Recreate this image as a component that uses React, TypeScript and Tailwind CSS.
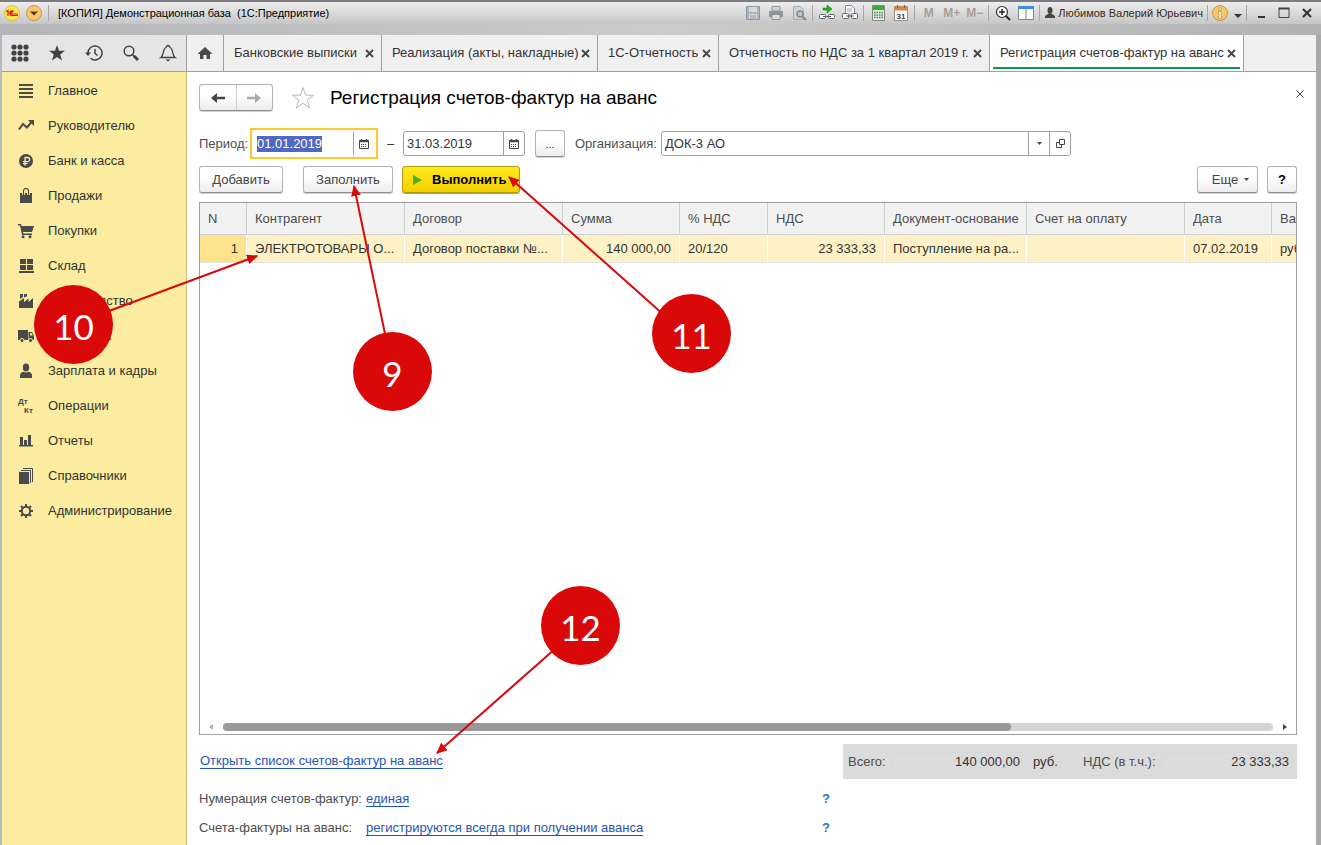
import { useEffect, useRef } from "react";
import type { ReactNode } from "react";

const SECTIONS: { label: string; icon: ReactNode }[] = [
  { label: "Главное", icon: <path d="M1 1h14v2H1zM1 5h14v2H1zM1 9h14v2H1zM1 13h14v2H1z" /> },
  {
    label: "Руководителю",
    icon: (
      <>
        <path d="M1 11.500 5 6l4 3.500L13.500 4" fill="none" stroke="currentColor" strokeWidth="2" />
        <path d="M10 2h6v6z" />
      </>
    ),
  },
  {
    label: "Банк и касса",
    icon: (
      <>
        <circle cx="8" cy="8" r="7" />
        <path
          d="M7 12.500V4.500h2.500a2 2 0 0 1 0 4.200H5M5 10.600h4.500"
          fill="none"
          stroke="#fbeca0"
          strokeWidth="1.3"
        />
      </>
    ),
  },
  {
    label: "Продажи",
    icon: (
      <>
        <path d="M2 5h12v10H2z" />
        <path d="M5.500 7V3.500a2.500 2.500 0 0 1 5 0V7" fill="none" stroke="#fbeca0" strokeWidth="3" />
        <path d="M5.500 7V3a2.500 2.500 0 0 1 5 0v4" fill="none" stroke="currentColor" strokeWidth="1.2" />
      </>
    ),
  },
  {
    label: "Покупки",
    icon: (
      <>
        <path d="M0 1h3l.6 2H16l-2 6H5l.4 1.500H14V12H4L2 2.500H0z" />
        <circle cx="5" cy="13.700" r="1.500" />
        <circle cx="12" cy="13.700" r="1.500" />
      </>
    ),
  },
  { label: "Склад", icon: <path d="M2 1h6v5H2zM9 1h6v5H9zM2 7h6v5H2zM9 7h6v5H9zM1 13h15v2H1z" /> },
  {
    label: "Производство",
    icon: <path d="M1 15V8.500L6 5v4l4.500-3.500v3.500L15 5v10zM2 1h3v3L2 6zM6 1h3v2.500L6 4.500z" />,
  },
  {
    label: "ОС и НМА",
    icon: (
      <>
        <path d="M0 2h10v10H0zM10.500 4H14l2 4v4h-5.500z" />
        <path d="M12 5h1.500l1.200 2.500H12z" fill="#fbeca0" />
        <circle cx="4" cy="12.500" r="2" stroke="#fbeca0" />
        <circle cx="12.500" cy="12.500" r="2" stroke="#fbeca0" />
      </>
    ),
  },
  {
    label: "Зарплата и кадры",
    icon: (
      <>
        <ellipse cx="8" cy="4.500" rx="3.200" ry="4" />
        <path d="M2 15v-3c0-2 2-3 4-3.200 1 1 3 1 4 0C12 9 14 10 14 12v3z" />
      </>
    ),
  },
  {
    label: "Операции",
    icon: (
      <g fontFamily="Liberation Sans, sans-serif" fontSize="8" fontWeight="bold">
        <text x="0" y="6">
          Дт
        </text>
        <text x="6" y="15">
          Кт
        </text>
      </g>
    ),
  },
  { label: "Отчеты", icon: <path d="M2 4h3v8H2zM6 7h3v5H6zM10 2h3v10h-3zM1 12h14v1.500H1z" /> },
  {
    label: "Справочники",
    icon: (
      <>
        <path d="M1 4h10v12H1z" />
        <path d="M3 2.500h9.500V15M5 .500h9.500V14" fill="none" stroke="currentColor" />
      </>
    ),
  },
  {
    label: "Администрирование",
    icon: (
      <>
        <circle cx="8" cy="8" r="4.200" fill="none" stroke="currentColor" strokeWidth="2" />
        <path
          d="M8 1v2.500M8 12.500V15M1 8h2.500M12.500 8H15M3 3l2 2M11 11l2 2M3 13l2-2M11 5l2-2"
          stroke="currentColor"
          strokeWidth="2"
        />
      </>
    ),
  },
];

const TABS = [
  { title: "Банковские выписки", width: "w-[158px]" },
  { title: "Реализация (акты, накладные)", width: "w-[216px]" },
  { title: "1С-Отчетность", width: "w-[121px]" },
  { title: "Отчетность по НДС за 1 квартал 2019 г.", width: "w-[271px]" },
  { title: "Регистрация счетов-фактур на аванс", width: "w-[254px]" },
];

const COLUMNS = [
  { title: "N", width: "w-[47px]", value: "1", right: true },
  { title: "Контрагент", width: "w-[158px]", value: "ЭЛЕКТРОТОВАРЫ О..." },
  { title: "Договор", width: "w-[158px]", value: "Договор поставки №..." },
  { title: "Сумма", width: "w-[117px]", value: "140 000,00", right: true },
  { title: "% НДС", width: "w-[88px]", value: "20/120" },
  { title: "НДС", width: "w-[117px]", value: "23 333,33", right: true },
  { title: "Документ-основание", width: "w-[142px]", value: "Поступление на ра..." },
  { title: "Счет на оплату", width: "w-[158px]", value: "" },
  { title: "Дата", width: "w-[87px]", value: "07.02.2019" },
  { title: "Валюта", width: "", value: "руб." },
];

const BUTTON =
  "flex h-[27px] items-center justify-center rounded-[3px] border border-[#b3b3b3] border-b-[#8f8f8f] bg-linear-to-b from-white from-40% to-[#ececec] shadow-[0_1px_0_#d0d0d0]";

function BarIcon({ label, children }: { label: string; children: ReactNode }) {
  return (
    <button type="button" aria-label={label} className="flex h-5 w-[23px] items-center justify-center">
      <svg width="16" height="16" viewBox="0 0 16 16" fill="none">
        {children}
      </svg>
    </button>
  );
}

function Separator() {
  return <span className="mx-[2px] h-4 w-px shrink-0 bg-[#a6a6a6]" />;
}

function TitleBar() {
  return (
    <header className="flex h-[35px] shrink-0 flex-col border-t-2 border-[#7c7b80] bg-linear-to-r from-[#b4b5b8] via-[#cbcbcb] to-[#b2b2b4]">
      <div className="flex h-[22px] items-center bg-linear-to-b from-[#ededed] to-[#c6c6c7] pr-[3px] pl-1 text-[11px] text-[#1b1b1b]">
        <svg width="16" height="16" viewBox="0 0 16 16">
          <circle cx="8" cy="8" r="7.500" fill="#fde94b" stroke="#e9bd43" />
          <path
            d="M2 6.500 4 5.500V11M9.500 6.500A2.300 2.300 0 1 0 8.500 10.500H14M8.800 7.500A1 1 0 1 0 8.500 9H14"
            fill="none"
            stroke="#d8150f"
            strokeWidth="1.200"
          />
        </svg>
        <button type="button" aria-label="Главное меню" className="ml-[6px]">
          <svg width="16" height="16" viewBox="0 0 16 16">
            <circle cx="8" cy="8" r="7.500" fill="#f9c86c" stroke="#cf9443" />
            <path d="M4 6.500h8L8 10.500z" fill="#4f3d22" />
          </svg>
        </button>
        <span className="ml-[6px] h-4 w-px bg-[#a6a6a6]" />
        <span className="ml-[9px] whitespace-pre text-black">
          {"[КОПИЯ] Демонстрационная база  (1С:Предприятие)"}
        </span>

        <div className="ml-auto flex items-center">
          <BarIcon label="Сохранить">
            <path d="M1.500 1.500h13v13h-13z" fill="#a9b4bf" stroke="#8b9aaa" />
            <path d="M4 2h8v5H4zM4 9h8v5H4z" fill="#d5dade" />
            <path d="M5 11h6M5 13h6" stroke="#8b9aaa" />
          </BarIcon>
          <BarIcon label="Печать">
            <path d="M4 1.500h8V6H4z" fill="#d0d4d8" stroke="#8e959d" />
            <path d="M1 6h14v6H1z" fill="#8e979f" />
            <path d="M4 9.500h8v5H4z" fill="#d9dcdf" stroke="#8e959d" />
          </BarIcon>
          <BarIcon label="Предварительный просмотр">
            <path d="M2.500 1.500h7l3 3v10h-10z" fill="#d3d5d8" stroke="#a6abb0" />
            <circle cx="9" cy="9" r="3" fill="#bcc9d4" stroke="#7d8b99" strokeWidth="1.500" />
            <path d="m11 11 4 4" stroke="#7d8b99" strokeWidth="2" />
          </BarIcon>
          <Separator />
          <BarIcon label="Перейти по ссылке">
            <path d="M4 3h4V0l5 4-5 4V5H4z" fill="#22b022" stroke="#157a15" strokeWidth=".5" />
            <rect x="0.500" y="9.500" width="6" height="4" rx="1" fill="#fff" stroke="#59636c" />
            <rect x="9.500" y="9.500" width="6" height="4" rx="1" fill="#fff" stroke="#59636c" />
            <path d="M4 11.500h8" stroke="#59636c" />
          </BarIcon>
          <BarIcon label="Получить ссылку">
            <path d="M3.500 8V.500h6l3 3V8" fill="#fff" stroke="#7f8992" />
            <path d="M5 4h5M5 6h5" stroke="#9ba6af" />
            <rect x="0.500" y="8.500" width="6" height="5" rx="1" fill="#fff" stroke="#59636c" />
            <rect x="9.500" y="8.500" width="6" height="5" rx="1" fill="#fff" stroke="#59636c" />
            <path d="M4 11h8" stroke="#59636c" />
          </BarIcon>
          <Separator />
          <BarIcon label="Калькулятор">
            <path d="M2.500.500h12v15h-12z" fill="#e8eee5" stroke="#7e8a7b" />
            <path d="M3 1h11v4H3z" fill="#35b23c" />
            <path
              d="M4 7.500h9M4 10h9M4 12.500h9"
              stroke="#4b7a4c"
              strokeWidth="1.500"
              strokeDasharray="1.500 1"
            />
          </BarIcon>
          <BarIcon label="Календарь">
            <path d="M1.500 1.500h13v14h-13z" fill="#fafafa" stroke="#9a8b7a" />
            <path d="M1.500 1.500h13v4h-13z" fill="#d8874b" />
            <path d="M4.500 0v3M11.500 0v3" stroke="#666" />
            <text
              x="3.500"
              y="13.500"
              fontSize="8"
              fontWeight="bold"
              fill="#444"
              fontFamily="Liberation Sans, sans-serif"
            >
              31
            </text>
          </BarIcon>
          <Separator />
          {["M", "M+", "M−"].map((name) => (
            <button key={name} type="button" className="w-[23px] text-center text-[12px] font-bold text-[#a99e95]">
              {name}
            </button>
          ))}
          <Separator />
          <BarIcon label="Масштаб">
            <circle cx="7" cy="7" r="5.500" fill="#fff" stroke="#2f2f2f" strokeWidth="1.200" />
            <path d="M4 7h6M7 4v6" stroke="#222" strokeWidth="1.500" />
            <path d="m11 11 4 4" stroke="#222" strokeWidth="2" />
          </BarIcon>
          <BarIcon label="Панели">
            <path d="M.500 1.500h15v13H.500z" fill="#fff" stroke="#7a8794" />
            <path d="M0 1h16v3H0z" fill="#3d8fdc" />
            <path d="M8 4v10" stroke="#7a8794" />
          </BarIcon>
          <Separator />
          <svg width="10" height="12" viewBox="0 0 10 12" className="ml-[3px] text-[#4b4540]">
            <ellipse cx="5" cy="3.500" rx="2.500" ry="3.500" fill="currentColor" />
            <path d="M0 11V9l3-2h4l3 2v2z" fill="currentColor" />
          </svg>
          <span className="mr-[2px] ml-[3px] text-[#3b2a1a]">Любимов Валерий Юрьевич</span>
          <Separator />
          <button type="button" aria-label="О программе" className="ml-[2px]">
            <svg width="16" height="16" viewBox="0 0 16 16">
              <circle cx="8" cy="8" r="7.500" fill="#f8c869" stroke="#cb9445" />
              <path d="M7 3h2.500v2H7zM6 6.500h3v5h1V13H6v-1.500h1V8H6z" fill="#fff" stroke="#8a6a35" strokeWidth=".5" />
            </svg>
          </button>
          <svg width="8" height="4" viewBox="0 0 8 4" className="mt-[6px] mr-[2px] ml-[6px]">
            <path d="M0 0h8L4 4z" fill="#333" />
          </svg>
          <Separator />
          <BarIcon label="Свернуть">
            <path d="M5 12h7" stroke="#333" strokeWidth="2" />
          </BarIcon>
          <BarIcon label="Развернуть">
            <path d="M3 3.500h10v9H3z" stroke="#444" />
            <path d="M2.500 3.500h11" stroke="#444" strokeWidth="2" />
          </BarIcon>
          <BarIcon label="Закрыть">
            <path d="m4 4 8 8M12 4l-8 8" stroke="#333" strokeWidth="2" />
          </BarIcon>
        </div>
      </div>
    </header>
  );
}

function TopBar() {
  return (
    <div className="flex h-[37px] shrink-0 border-b border-[#a0a0a0] bg-[#f0f0f0]">
      <div className="flex w-[185px] shrink-0 items-center justify-between border-r border-[#a0a0a0] bg-[#e5e5e5] px-[9px] text-[#424242]">
        <button type="button" aria-label="Меню функций">
          <svg width="18" height="18" viewBox="0 0 18 18" fill="currentColor">
            {[3, 9, 15].map((y) => [3, 9, 15].map((x) => <circle key={`${x}-${y}`} cx={x} cy={y} r="2.600" />))}
          </svg>
        </button>
        <button type="button" aria-label="Избранное">
          <svg width="18" height="18" viewBox="0 0 18 18" fill="currentColor">
            <path d="m9 1 2 5.800h6l-4.800 3.700L14 16.500 9 13l-5 3.500 1.800-6L1 6.800h6z" />
          </svg>
        </button>
        <button type="button" aria-label="История">
          <svg width="18" height="18" viewBox="0 0 18 18" fill="none" stroke="currentColor" strokeWidth="1.500">
            <path d="M3 9a7 7 0 1 1 2.500 5.300M10 5v4.500l2.500 2" />
            <path d="M0 8.500h6l-3 3.500z" fill="currentColor" stroke="none" />
          </svg>
        </button>
        <button type="button" aria-label="Поиск">
          <svg width="18" height="18" viewBox="0 0 18 18" fill="none" stroke="currentColor">
            <circle cx="7" cy="7" r="4.800" strokeWidth="1.500" />
            <path d="m10.500 10.500 2 2" strokeWidth="1.500" />
            <path d="m12 12 4 4" strokeWidth="3" />
          </svg>
        </button>
        <button type="button" aria-label="Уведомления">
          <svg width="18" height="18" viewBox="0 0 18 18" fill="none" stroke="currentColor" strokeWidth="1.300">
            <path d="M2 13.500c3-2 1.500-9 5.500-10.500a1.500 1.500 0 0 1 3 0c4 1.500 2.500 8.500 5.500 10.500z" />
            <path d="M6.500 15.500h5L9 17.500z" fill="currentColor" stroke="none" />
          </svg>
        </button>
      </div>
      <button
        type="button"
        aria-label="Начальная страница"
        className="flex w-[37px] shrink-0 items-center justify-center border-r border-[#a0a0a0] text-[#4a4a4a]"
      >
        <svg width="16" height="14" viewBox="0 0 16 14" fill="currentColor">
          <path d="M8 1 15.500 8H13v5H9.500V9h-3v4H3V8H.500z" />
        </svg>
      </button>
      {TABS.map(({ title, width }, i) => {
        const active = i === TABS.length - 1;
        return (
          <div
            key={title}
            className={`${width} flex shrink-0 flex-col border-r border-[#a0a0a0] px-[3px] ${active ? "bg-white" : ""}`}
          >
            <div
              className={`flex flex-1 items-center justify-between pr-1 pl-[7px] whitespace-nowrap text-[#333] ${active ? "pt-1" : ""}`}
            >
              <a href="#">{title}</a>
              <button type="button" aria-label="Закрыть вкладку">
                <svg width="9" height="9" viewBox="0 0 9 9" stroke="#444" strokeWidth="1.800">
                  <path d="m1 1 7 7M8 1 1 8" />
                </svg>
              </button>
            </div>
            {active && <div className="mb-[2px] h-[2px] bg-[#0a9950]" />}
          </div>
        );
      })}
    </div>
  );
}

function CalendarButton({ label }: { label: string }) {
  return (
    <button
      type="button"
      aria-label={label}
      className="flex w-[21px] items-center justify-center self-stretch border-l border-[#a0a0a0]"
    >
      <svg width="10" height="10" viewBox="0 0 10 10" fill="none" stroke="#444">
        <path d="M.500 1.500h9v8h-9z" />
        <path d="M0 2.500h10M2.500 0v2M7.500 0v2" strokeWidth="1.500" />
        <path d="M2 5.500h6M2 7.500h6" strokeDasharray="1 1" />
      </svg>
    </button>
  );
}

function PeriodRow() {
  const dateFrom = useRef<HTMLInputElement>(null);

  useEffect(() => {
    dateFrom.current?.focus();
    dateFrom.current?.select();
  }, []);

  return (
    <div className="flex h-[31px] items-center">
      <label htmlFor="date-from" className="w-[51px] shrink-0 text-[#4d4d4d]">
        Период:
      </label>
      <div className="flex h-[31px] w-[128px] items-center border-2 border-[#fccb2a] bg-white py-[2px] pr-[2px]">
        <input
          id="date-from"
          ref={dateFrom}
          defaultValue="01.01.2019"
          className="min-w-0 flex-1 pl-[5px] outline-none selection:bg-[#5167c2] selection:text-white"
        />
        <CalendarButton label="Выбрать начало периода" />
      </div>
      <span className="w-[25px] text-center">–</span>
      <div className="flex h-[25px] w-[122px] items-center rounded-[3px] border border-[#a0a0a0] bg-white">
        <input
          id="date-to"
          aria-label="Конец периода"
          defaultValue="31.03.2019"
          className="min-w-0 flex-1 pl-[3px] outline-none"
        />
        <CalendarButton label="Выбрать конец периода" />
      </div>
      <button type="button" className={`${BUTTON} ml-[10px] w-[30px] text-[11px]`}>
        ...
      </button>
      <label htmlFor="organization" className="ml-[10px] w-[86px] shrink-0 text-[#4d4d4d]">
        Организация:
      </label>
      <div className="flex h-[25px] w-[410px] items-center rounded-[3px] border border-[#a0a0a0] bg-white">
        <input id="organization" defaultValue="ДОК-3 АО" className="min-w-0 flex-1 pl-[3px] outline-none" />
        <button
          type="button"
          aria-label="Выбрать из списка"
          className="flex w-[21px] items-center justify-center self-stretch border-l border-[#a0a0a0]"
        >
          <svg width="5" height="3" viewBox="0 0 5 3">
            <path d="M0 0h5L2.500 3z" fill="#444" />
          </svg>
        </button>
        <button
          type="button"
          aria-label="Открыть"
          className="flex w-[21px] items-center justify-center self-stretch border-l border-[#a0a0a0]"
        >
          <svg width="9" height="9" viewBox="0 0 9 9" fill="none" stroke="#444">
            <path d="M3.500.500h5v5h-5zM3 3.500H.500v5h5V6" />
          </svg>
        </button>
      </div>
    </div>
  );
}

function InvoiceTable() {
  return (
    <div className="mt-[9px] flex flex-1 flex-col overflow-hidden border border-[#a0a0a0] bg-white">
      <table className="w-full table-fixed border-separate border-spacing-0">
        <thead>
          <tr className="h-8">
            {COLUMNS.map((col) => (
              <th
                key={col.title}
                className={`${col.width} overflow-hidden border-r border-b border-r-[#cfcfcf] border-b-[#cfcfcf] bg-[#f2f2f2] py-0 pr-0 pl-2 text-left font-normal whitespace-nowrap text-[#4d4d4d] last:border-r-0`}
              >
                {col.title}
              </th>
            ))}
          </tr>
        </thead>
        <tbody>
          <tr className="h-[28px]">
            {COLUMNS.map((col, i) => (
              <td
                key={col.title}
                className={`overflow-hidden border-r border-b border-r-white border-b-[#e4e4e4] px-2 py-0 whitespace-nowrap last:border-r-0 last:pr-0 ${
                  col.right ? "text-right" : ""
                } ${i === 0 ? "bg-[#fde38c]" : "bg-[#fef1c5]"}`}
              >
                {col.value}
              </td>
            ))}
          </tr>
        </tbody>
      </table>
      <div className="mt-auto mb-[3px] flex h-2 items-center pr-[9px] pl-[9px]">
        <svg width="4" height="6" viewBox="0 0 4 6">
          <path d="M4 0v6L0 3z" fill="#b5b5b5" />
        </svg>
        <div className="mr-[10px] ml-[10px] h-2 flex-1 rounded-full bg-[#d5d5d5]">
          <div className="h-2 w-3/4 rounded-full bg-[#999]" />
        </div>
        <svg width="4" height="6" viewBox="0 0 4 6">
          <path d="M0 0v6l4-3z" fill="#444" />
        </svg>
      </div>
    </div>
  );
}

function Footer() {
  const link = "border-b border-[#1f55b5] leading-[14px] text-[#1f55b5]";
  return (
    <footer className="shrink-0 pb-[3px] text-[#4d4d4d]">
      <div className="mt-[9px] mb-[5px] flex h-[35px] items-center justify-between">
        <a href="#" className={`${link} ml-px`}>
          Открыть список счетов-фактур на аванс
        </a>
        <div className="flex h-full w-[454px] items-center bg-[#dbdbdb] px-[5px]">
          <span className="w-[44px]">Всего:</span>
          <span className="flex-1 rounded-[3px] border border-[#d7d7d7] py-px pr-[2px] text-right text-[#333]">
            140 000,00
          </span>
          <span className="ml-[10px] w-[50px] text-[#333]">руб.</span>
          <span className="w-[78px]">НДС (в т.ч.):</span>
          <span className="flex-1 rounded-[3px] border border-[#d7d7d7] py-px pr-[2px] text-right text-[#333]">
            23 333,33
          </span>
        </div>
      </div>
      {[
        ["Нумерация счетов-фактур:", "единая"],
        ["Счета-фактуры на аванс:", "регистрируются всегда при получении аванса"],
      ].map(([label, value]) => (
        <div key={label} className="flex h-[29px] items-center">
          <span className="w-[167px]">{label}</span>
          <div className="w-[456px]">
            <a href="#" className={link}>
              {value}
            </a>
          </div>
          <button type="button" className="font-bold text-[#1c7ac4]">
            ?
          </button>
        </div>
      ))}
    </footer>
  );
}

// Numbered step markers drawn over the form
function Callouts() {
  const marker =
    "absolute flex size-[79px] items-center justify-center rounded-full bg-[#d90909] pt-[2px] font-[Lato,sans-serif] text-[35px] text-white";
  return (
    <div className="pointer-events-none absolute inset-0">
      <svg className="absolute inset-0" width="1321" height="845" viewBox="0 0 1321 845">
        <defs>
          <marker id="tip" markerWidth="11" markerHeight="10" refX="10" refY="5" orient="auto" markerUnits="userSpaceOnUse">
            <path d="M0 0 11 5 0 10z" fill="#d90909" />
          </marker>
        </defs>
        <g stroke="#d90909" strokeWidth="2">
          <path d="M74 324 257 256" markerEnd="url(#tip)" />
          <path d="M393 372 354 186" markerEnd="url(#tip)" />
          <path d="M692 340 509 177" markerEnd="url(#tip)" />
          <path d="M581 626 437 753" markerEnd="url(#tip)" />
        </g>
      </svg>
      <span className={`${marker} top-[285px] left-[34px]`}>10</span>
      <span className={`${marker} top-[332px] left-[353px]`}>9</span>
      <span className={`${marker} top-[294px] left-[652px]`}>11</span>
      <span className={`${marker} top-[586px] left-[541px]`}>12</span>
    </div>
  );
}

export default function App() {
  return (
    <div className="relative flex h-screen flex-col overflow-hidden bg-[#b5b6b9] font-['Liberation_Sans',Arial,sans-serif] text-[13px] leading-4 text-[#333]">
      <TitleBar />
      <div className="flex min-h-0 flex-1 flex-col border-r-5 border-l-2 border-r-[#a9a9ab] border-l-[#b5b9c0]">
        <TopBar />
        <div className="flex min-h-0 flex-1">
          <nav className="w-[185px] shrink-0 border-r border-[#c9bd80] bg-[#fbeca0] pt-px">
            {SECTIONS.map((section) => (
              <a key={section.label} href="#" className="flex h-[35px] items-center gap-[14px] pl-4">
                <svg width="16" height="16" viewBox="0 0 16 16" fill="currentColor" className="text-[#4a4a4a]">
                  {section.icon}
                </svg>
                {section.label}
              </a>
            ))}
          </nav>

          <main className="flex min-w-0 flex-1 flex-col bg-white pr-[19px] pl-3">
            <div className="flex h-[51px] shrink-0 items-center">
              <div className={`${BUTTON} w-[74px]`}>
                <button
                  type="button"
                  aria-label="Назад"
                  className="flex flex-1 items-center justify-center self-stretch border-r border-[#d0d0d0]"
                >
                  <svg width="14" height="10" viewBox="0 0 14 10" fill="#444">
                    <path d="M0 5 6 0v3.800h8v2.400H6V10z" />
                  </svg>
                </button>
                <button
                  type="button"
                  aria-label="Вперед"
                  className="flex flex-1 items-center justify-center self-stretch"
                >
                  <svg width="14" height="10" viewBox="0 0 14 10" fill="#aaa">
                    <path d="M14 5 8 0v3.800H0v2.400h8V10z" />
                  </svg>
                </button>
              </div>
              <button type="button" aria-label="Добавить в избранное" className="ml-[18px]">
                <svg width="24" height="24" viewBox="0 0 24 24" fill="none" stroke="#b4bac2">
                  <path d="m12 1.500 2.600 7.700h8.200l-6.600 4.900 2.500 8L12 17.300l-6.700 4.800 2.500-8L1.200 9.200h8.200z" />
                </svg>
              </button>
              <h1 className="ml-[15px] text-[19px] leading-6 text-black">Регистрация счетов-фактур на аванс</h1>
              <button type="button" aria-label="Закрыть" className="-mr-[7px] mb-2 ml-auto">
                <svg width="8" height="8" viewBox="0 0 8 8" stroke="#444">
                  <path d="m.500.500 7 7M7.500.500l-7 7" />
                </svg>
              </button>
            </div>
            <div className="mt-[5px]">
              <PeriodRow />
            </div>
            <div className="mt-[7px] flex text-[#444]">
              <button type="button" className={`${BUTTON} w-[84px]`}>
                Добавить
              </button>
              <button type="button" className={`${BUTTON} ml-5 w-[90px]`}>
                Заполнить
              </button>
              <button
                type="button"
                className="ml-[9px] flex h-[27px] w-[118px] items-center gap-[10px] rounded-[3px] border border-[#b09a10] bg-linear-to-b from-[#ffea1a] to-[#f3d000] pl-[10px] font-bold text-black shadow-[0_1px_0_#bda530]"
              >
                <svg width="9" height="10" viewBox="0 0 9 10">
                  <path d="M0 0v10l9-5z" fill="#4db01d" />
                </svg>
                Выполнить
              </button>
              <button type="button" className={`${BUTTON} ml-auto w-[61px] gap-[6px] pl-[6px]`}>
                Еще
                <svg width="5" height="3" viewBox="0 0 5 3">
                  <path d="M0 0h5L2.500 3z" fill="#444" />
                </svg>
              </button>
              <button type="button" className={`${BUTTON} ml-[9px] w-[30px] font-bold text-black`}>
                ?
              </button>
            </div>
            <InvoiceTable />
            <Footer />
          </main>
        </div>
      </div>
      <Callouts />
    </div>
  );
}
